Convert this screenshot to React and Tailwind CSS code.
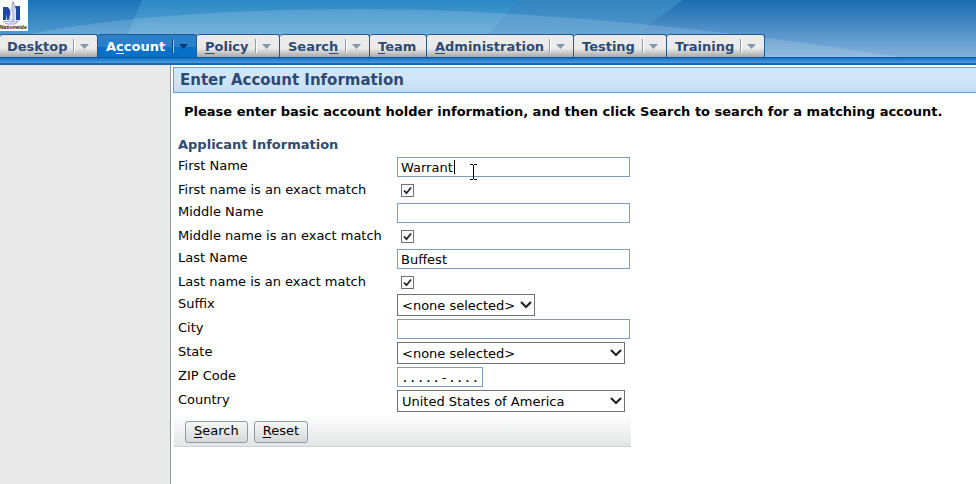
import React from "react";

const tabs = [
  { pre: "Des", key: "k", post: "top", menu: true, width: "w-[98px]", pad: "pl-[7px]" },
  { pre: "A", key: "c", post: "count", menu: true, active: true, width: "w-[99px]", pad: "pl-2" },
  { pre: "", key: "P", post: "olicy", menu: true, width: "w-[83px]", pad: "pl-2" },
  { pre: "Searc", key: "h", post: "", menu: true, width: "w-[90px]", pad: "pl-2" },
  { pre: "", key: "T", post: "eam", menu: false, width: "w-[57px]", pad: "pl-2" },
  { pre: "", key: "A", post: "dministration", menu: true, width: "w-[147px]", pad: "pl-2" },
  { pre: "Testing", key: "", post: "", menu: true, width: "w-[93px]", pad: "pl-2" },
  { pre: "Training", key: "", post: "", menu: true, width: "w-[98px]", pad: "pl-2" },
];

function Tab({ tab }) {
  const tone = tab.active
    ? "border-[#24598d] bg-linear-to-b from-[#2a80cb] from-55% to-[#0570c8] to-55% text-white"
    : "border-[#24598d] bg-linear-to-b from-[#ebebeb] from-60% to-[#a8a8a8] text-[#2d4a74]";
  return (
    <div className={`${tab.width} ${tab.pad} ${tone} flex h-[23px] shrink-0 items-center justify-between rounded-t-[3px] border-t border-r pr-2`}>
      <a href="#" className="pt-px text-[13px] leading-5 font-bold whitespace-nowrap">
        {tab.pre}
        <span className="underline underline-offset-2">{tab.key}</span>
        {tab.post}
      </a>
      {tab.menu && (
        <button type="button" aria-label="Open menu" className="flex h-full items-center gap-[5px]">
          <span className={`h-[14px] w-[2px] border-l ${tab.active ? "border-[#064a86] bg-[#8ec4ee]" : "border-[#8d9cae] bg-white"}`} />
          <svg width="9" height="5" viewBox="0 0 9 5" className={tab.active ? "text-[#043a72]" : "text-[#8597ac]"}>
            <path d="M0 0h9L4.500 5z" fill="currentColor" />
          </svg>
        </button>
      )}
    </div>
  );
}

function Logo() {
  return (
    <svg width="28" height="31" viewBox="0 0 28 31" className="block" role="img" aria-label="Nationwide">
      <rect width="28" height="31" fill="#fff" />
      <path d="M3 7h5l2 3v10H7v-6l-1 6H3z" fill="#2246a8" />
      <path d="M14 6h6v14h-4V9z" fill="#2246a8" />
      <path d="M13 1l2 6v13H9l2-9z" fill="#f4f6fa" stroke="#98a6c4" strokeWidth=".7" />
      <path d="M13 2v20M3 22q5-1 9 0t7-2M5 23l3 1h7l3-2" fill="none" stroke="#7186b8" strokeWidth=".8" />
      <text x="0" y="29" fontSize="5" fontWeight="bold" fontFamily="Liberation Sans, sans-serif" fill="#111">Nationwide</text>
    </svg>
  );
}

function Backdrop() {
  return (
    <svg className="absolute inset-0 h-full w-full" viewBox="0 0 976 57" preserveAspectRatio="none" aria-hidden="true">
      <defs>
        <linearGradient id="sky" x1="0" y1="0" x2="0" y2="1">
          <stop offset="0" stopColor="#1a6db3" />
          <stop offset="1" stopColor="#82b1da" />
        </linearGradient>
        <linearGradient id="beam" x1="0" y1="0" x2="0" y2="1">
          <stop offset="0" stopColor="#2b88c6" />
          <stop offset="1" stopColor="#80b8de" />
        </linearGradient>
        <linearGradient id="left" x1="0" y1="0" x2="0" y2="1">
          <stop offset="0" stopColor="#1c74b8" />
          <stop offset="1" stopColor="#70b2dc" />
        </linearGradient>
      </defs>
      <rect width="976" height="57" fill="url(#sky)" />
      <path d="M0 0H143L118 57H0z" fill="url(#left)" />
      <path d="M142 0H521L466 57H118z" fill="url(#beam)" />
      <path d="M521 0H683L605 57H466z" fill="#4a9bce" opacity=".5" />
      <path d="M30 34Q150 10 360 9Q600 10 900 57H30z" fill="#fff" opacity=".14" />
    </svg>
  );
}

const boxClass = "mt-px h-5 border border-[#7f9db9] bg-white px-[3px] text-[13px] text-black outline-none";

function Row({ id, label, short, children }) {
  return (
    <div className={`flex ${short ? "h-[22px]" : "h-6"}`}>
      <label htmlFor={id} className="w-[219px] shrink-0 leading-5">{label}</label>
      {children}
    </div>
  );
}

function TextRow({ id, label, value = "" }) {
  return (
    <Row id={id} label={label}>
      <input id={id} type="text" defaultValue={value} className={`${boxClass} w-[233px]`} />
    </Row>
  );
}

function CheckRow({ id, label }) {
  return (
    <Row id={id} label={label} short>
      <span className="relative mt-1 ml-1 block size-[13px]">
        <input id={id} type="checkbox" defaultChecked className="peer block size-[13px] appearance-none border border-[#707070] bg-white" />
        <svg viewBox="0 0 13 13" className="pointer-events-none absolute inset-0 hidden size-[13px] peer-checked:block">
          <path d="M3 6.500l2.500 2.700L10 3.500" fill="none" stroke="#222" strokeWidth="1.800" />
        </svg>
      </span>
    </Row>
  );
}

function SelectRow({ id, label, value, width }) {
  return (
    <Row id={id} label={label}>
      <span className={`relative block h-[22px] ${width}`}>
        <select id={id} defaultValue={value} className="block h-[22px] w-full appearance-none border border-[#707070] bg-white pt-px pl-1 text-[13px] text-black">
          <option>{value}</option>
        </select>
        <svg width="12" height="8" viewBox="0 0 12 8" className="pointer-events-none absolute top-[7px] right-[3px]">
          <path d="M1 1l5 5 5-5" fill="none" stroke="#222" strokeWidth="2.200" />
        </svg>
      </span>
    </Row>
  );
}

function PushButton({ first, rest, type }) {
  return (
    <button type={type} className="h-[22px] rounded-[3px] border border-[#8f99a6] bg-linear-to-b from-[#f5f6f6] to-[#d5d8da] px-2 pb-[2px] text-[13px] leading-4 text-black">
      <span className="underline underline-offset-2">{first}</span>{rest}
    </button>
  );
}

export default function App() {
  return (
    <div className="flex min-h-screen flex-col bg-white font-['DejaVu_Sans',Verdana,sans-serif] text-[13px] text-black">
      <header>
        <div className="relative">
          <Backdrop />
          <div className="relative">
            <div className="h-[34px]"><Logo /></div>
            <nav className="flex">
              {tabs.map((t) => <Tab key={t.pre + t.key + t.post} tab={t} />)}
            </nav>
          </div>
        </div>
        <div className="h-2 border-t border-b-2 border-t-[#095b9f] border-b-[#1d65aa] bg-linear-to-b from-[#0871c9] to-[#4f9ddd]" />
      </header>
      <div className="flex flex-1">
        <aside className="w-[171px] shrink-0 border-r border-[#8d98a8] bg-[#e9e9e9]" />
        <main className="min-w-0 flex-1 pt-[2px] pl-[2px]">
          <h1 className="h-[26px] border border-r-0 border-[#5ca3d9] bg-linear-to-b from-[#d2e6fa] from-50% to-[#c1dcf7] pl-[6px] text-[15px] leading-6 font-bold text-[#2d4a74]">
            Enter Account Information
          </h1>
          <p className="mt-[9px] pl-[11px] leading-5 font-bold whitespace-nowrap">
            Please enter basic account holder information, and then click Search to search for a matching account.
          </p>
          <form className="mt-[13px] w-[458px]" onSubmit={(e) => e.preventDefault()}>
            <div className="pl-[5px]">
              <h2 className="h-[21px] leading-5 font-bold text-[#2d4a74]">Applicant Information</h2>
              <Row id="first" label="First Name">
                <div className="relative">
                  <input id="first" type="text" defaultValue="Warrant" className={`${boxClass} block w-[233px]`} />
                  <span className="pointer-events-none absolute top-1 left-[57px] h-[14px] w-px bg-black" />
                  <svg width="7" height="16" viewBox="0 0 7 16" className="pointer-events-none absolute top-2 left-[73px]">
                    <path d="M0 .5h3M4 .5h3M0 15.500h3M4 15.500h3M3.500 1v14" fill="none" stroke="#000" />
                  </svg>
                </div>
              </Row>
              <CheckRow id="first-exact" label="First name is an exact match" />
              <TextRow id="middle" label="Middle Name" />
              <CheckRow id="middle-exact" label="Middle name is an exact match" />
              <TextRow id="last" label="Last Name" value="Buffest" />
              <CheckRow id="last-exact" label="Last name is an exact match" />
              <SelectRow id="suffix" label="Suffix" value="<none selected>" width="w-[138px]" />
              <TextRow id="city" label="City" />
              <SelectRow id="state" label="State" value="<none selected>" width="w-[228px]" />
              <Row id="zip" label="ZIP Code">
                <input id="zip" type="text" defaultValue=".....-...." className={`${boxClass} w-[86px] font-['DejaVu_Sans_Mono',monospace]`} />
              </Row>
              <SelectRow id="country" label="Country" value="United States of America" width="w-[228px]" />
            </div>
            <div className="ml-px flex h-[33px] gap-[6px] border-b border-[#d0d1d1] bg-linear-to-b from-white to-[#e3e4e4] pt-[7px] pl-[11px]">
              <PushButton type="submit" first="S" rest="earch" />
              <PushButton type="reset" first="R" rest="eset" />
            </div>
          </form>
        </main>
      </div>
    </div>
  );
}
